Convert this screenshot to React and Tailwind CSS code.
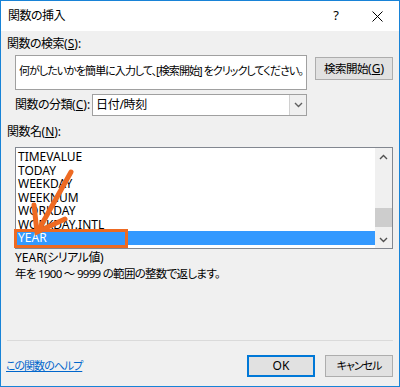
import React from "react";

const F = { fontFamily: '"Noto Sans", "Noto Sans CJK JP", sans-serif' };

function ChevronDown({ className }) {
  return (
    <svg width="9" height="6" viewBox="0 0 9 6" className={className}>
      <path d="M1 1 L4.5 4.5 L8 1" fill="none" stroke="currentColor" strokeWidth="1.4" />
    </svg>
  );
}
function ChevronUp({ className }) {
  return (
    <svg width="9" height="6" viewBox="0 0 9 6" className={className}>
      <path d="M1 5 L4.5 1.5 L8 5" fill="none" stroke="currentColor" strokeWidth="1.4" />
    </svg>
  );
}

export default function App() {
  const items = ["TIMEVALUE", "TODAY", "WEEKDAY", "WEEKNUM", "WORKDAY", "WORKDAY.INTL"];
  return (
    <div
      className="w-[400px] h-[387px] border border-[#1883d7] bg-[#f0f0f0] flex flex-col text-[12px] text-black overflow-hidden [font-feature-settings:'palt']"
      style={F}
    >
      {/* Title bar */}
      <div className="h-[30px] bg-white flex items-center pl-[7px] shrink-0">
        <span className="text-[12px] tracking-[-0.5px]">関数の挿入</span>
        <span className="ml-auto mr-[33px] text-[13px]">?</span>
        <svg width="11" height="11" viewBox="0 0 11 11" className="mr-[16px]">
          <path d="M0.5 0.5 L10.5 10.5 M10.5 0.5 L0.5 10.5" stroke="#000" strokeWidth="1" />
        </svg>
      </div>

      {/* Search label */}
      <div className="mt-[5px] h-[16px] leading-[16px] pl-[6px] whitespace-nowrap">
        <span className="tracking-[-0.5px]">関数の検索</span>(<span className="underline">S</span>):
      </div>

      {/* Search row */}
      <div className="mt-[3px] h-[35px] flex items-start">
        <div className="ml-[14px] w-[292px] h-[35px] bg-white border border-[#a0a0a0] px-[3px] pt-[7px] leading-[16px] whitespace-nowrap overflow-hidden text-[11px] tracking-[-0.95px]">
          何がしたいかを簡単に入力して、[検索開始] をクリックしてください。
        </div>
        <div className="ml-[8px] mt-[2px] w-[78px] h-[23px] bg-[#e1e1e1] border border-[#adadad] flex items-center justify-center whitespace-nowrap">
          <span className="text-[11.5px] tracking-[-0.5px]">検索開始</span>(<span className="underline">G</span>)
        </div>
      </div>

      {/* Category row */}
      <div className="mt-[4px] h-[22px] flex items-center">
        <div className="ml-[14px] w-[77px] whitespace-nowrap">
          <span className="tracking-[-0.5px]">関数の分類</span>(<span className="underline">C</span>):
        </div>
        <div className="w-[215px] h-[22px] bg-white border border-[#a0a0a0] flex items-center">
          <span className="pl-[3px] tracking-[-0.3px]">日付/時刻</span>
          <div className="ml-auto w-[17px] h-full bg-[#f0f0f0] border-l border-[#d0d0d0] flex items-center justify-center text-[#606060]">
            <ChevronDown />
          </div>
        </div>
      </div>

      {/* Name label */}
      <div className="mt-[8px] h-[16px] leading-[16px] pl-[6px] whitespace-nowrap">
        <span className="tracking-[-0.5px]">関数名</span>(<span className="underline">N</span>):
      </div>

      {/* List box */}
      <div className="relative mt-[7px] ml-[14px] w-[378px] h-[102px] bg-white border border-[#828790] flex">
        <div className="flex-1 pt-[2px]">
          {items.map((t) => (
            <div key={t} className="h-[13.5px] leading-[13.5px] pl-[2px]">
              {t}
            </div>
          ))}
          <div className="h-[14px] leading-[14px] pl-[2px] bg-[#3399ff] text-white">YEAR</div>
        </div>
        <div className="w-[17px] h-full bg-[#f0f0f0] flex flex-col items-center text-[#505050]">
          <div className="h-[17px] flex items-center justify-center">
            <ChevronUp />
          </div>
          <div className="flex-1 w-full relative">
            <div className="absolute left-0 right-0 top-[43px] h-[19px] bg-[#cdcdcd]" />
          </div>
          <div className="h-[17px] flex items-center justify-center">
            <ChevronDown />
          </div>
        </div>

        {/* Orange highlight box */}
        <div className="absolute left-[-2px] top-[81px] w-[114px] h-[19px] border-[3px] border-[#ee6a22]" />
        {/* Orange arrow */}
        <svg
          className="absolute left-[-15px] top-[-147px] overflow-visible"
          width="100"
          height="400"
          viewBox="0 0 100 400"
        >
          <g stroke="#ee6a22" strokeWidth="5" strokeLinecap="round" fill="none">
            <path d="M70 171 L37 230" />
            <path d="M33 204 L36 231 L64 218" strokeLinejoin="miter" />
          </g>
        </svg>
      </div>

      {/* Description */}
      <div className="mt-[1px] h-[16px] leading-[16px] pl-[14px] whitespace-nowrap">
        YEAR(<span className="tracking-[-0.5px]">シリアル値</span>)
      </div>
      <div className="h-[16px] leading-[16px] pl-[14px] whitespace-nowrap text-[11.5px] tracking-[-0.7px]">
        年を 1900 ～ 9999 の範囲の整数で返します。
      </div>

      {/* Separator */}
      <div className="mt-[58px] mx-[6px] h-px bg-[#dadada]" />

      {/* Bottom row */}
      <div className="mt-[14px] h-[22px] flex items-center">
        <span className="pl-[5px] text-[#0066cc] underline text-[11px] tracking-[-1px] whitespace-nowrap">この関数のヘルプ</span>
        <div className="ml-auto w-[68px] h-[22px] bg-[#e1e1e1] border-2 border-[#0078d7] flex items-center justify-center">
          OK
        </div>
        <div className="ml-[10px] mr-[6px] w-[68px] h-[22px] bg-[#e1e1e1] border border-[#adadad] flex items-center justify-center whitespace-nowrap text-[11px] tracking-[-1px]">
          キャンセル
        </div>
      </div>
    </div>
  );
}
